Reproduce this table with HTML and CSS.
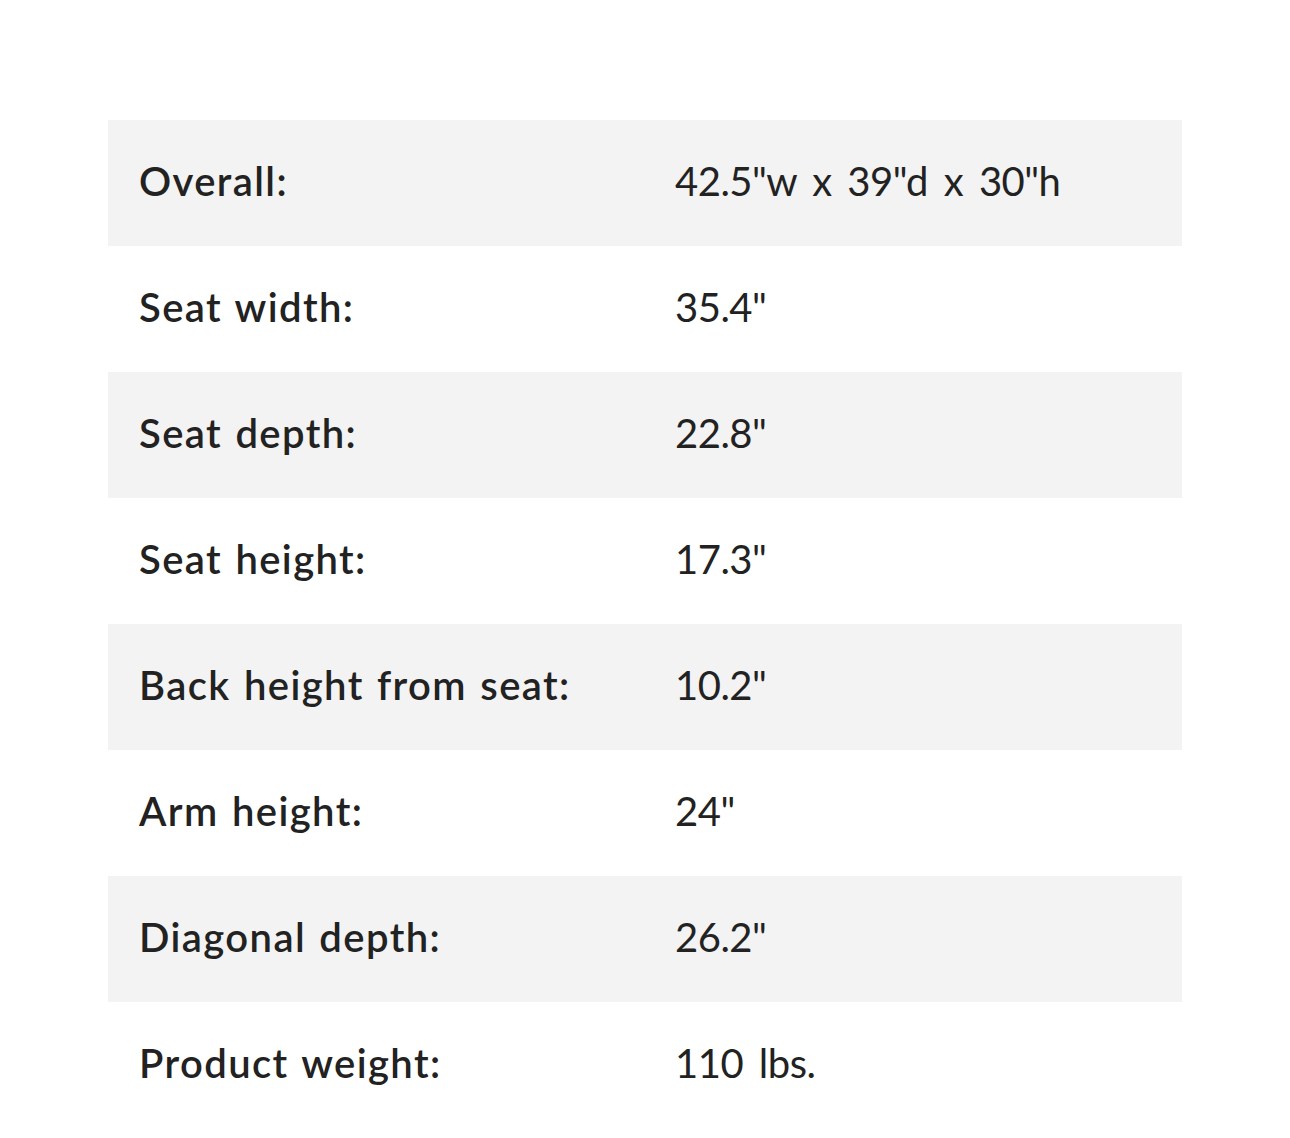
FILE: index.html
```html
<!DOCTYPE html>
<html>
<head>
<meta charset="utf-8">
<link rel="stylesheet" href="styles.css">
</head>
<body>
<div class="page">
  <div class="specs">
    <div class="row shaded"><div class="label">Overall:</div><div class="value">42.5"w x 39"d x 30"h</div></div>
    <div class="row"><div class="label">Seat width:</div><div class="value">35.4"</div></div>
    <div class="row shaded"><div class="label">Seat depth:</div><div class="value">22.8"</div></div>
    <div class="row"><div class="label">Seat height:</div><div class="value">17.3"</div></div>
    <div class="row shaded"><div class="label">Back height from seat:</div><div class="value">10.2"</div></div>
    <div class="row"><div class="label">Arm height:</div><div class="value">24"</div></div>
    <div class="row shaded"><div class="label">Diagonal depth:</div><div class="value">26.2"</div></div>
    <div class="row"><div class="label">Product weight:</div><div class="value">110 lbs.</div></div>
  </div>
</div>
</body>
</html>
```
FILE: styles.css
```css
html, body {
  margin: 0;
  padding: 0;
  background: #ffffff;
}
.page {
  padding: 120px 108px 10px 108px;
  font-family: Lato, "Noto Sans", sans-serif;
  color: #222222;
}
.specs {
  display: flex;
  flex-direction: column;
}
.row {
  display: grid;
  grid-template-columns: 536px 1fr;
  align-items: center;
  height: 126px;
  padding-left: 31px;
  box-sizing: border-box;
}
.row.shaded {
  background: #f3f3f3;
}
.label {
  font-size: 40px;
  font-weight: 600;
  letter-spacing: 1.4px;
  word-spacing: 2px;
  line-height: 1;
  padding-bottom: 4px;
}
.value {
  font-size: 40px;
  font-weight: 400;
  letter-spacing: -0.5px;
  word-spacing: 6px;
  line-height: 1;
  padding-bottom: 4px;
}
```
